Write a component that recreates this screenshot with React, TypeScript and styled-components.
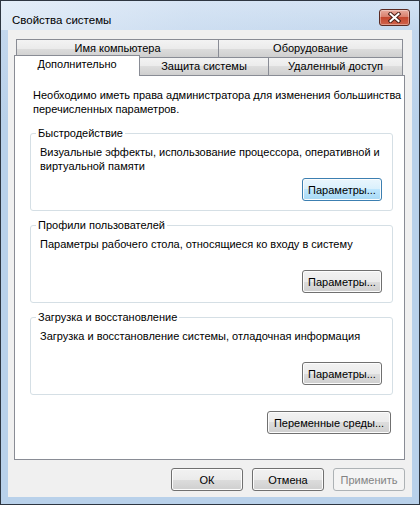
import React from 'react'
import styled, { createGlobalStyle, css } from 'styled-components'

const GlobalStyle = createGlobalStyle`
  html, body {
    margin: 0;
    padding: 0;
    background: #ffffff;
  }
  body {
    font-family: "Liberation Sans", "DejaVu Sans", sans-serif;
    font-size: 11px;
    color: #000;
  }
  * {
    box-sizing: border-box;
  }
`

const Window = styled.div`
  width: 420px;
  height: 505px;
  border: 1px solid #2e3641;
  padding: 0 7px 7px 7px;
  display: flex;
  flex-direction: column;
  background: linear-gradient(to bottom, #d3e2f3 0px, #c3d7ed 30px, #b9d1ea 120px, #b9d1ea 100%);
`

const TitleBar = styled.div`
  height: 29px;
  margin: 0 -7px;
  padding: 0 9px 0 11px;
  display: flex;
  justify-content: space-between;
  align-items: flex-start;
  background: linear-gradient(100deg, rgba(235, 242, 250, 0.7) 0%, rgba(220, 232, 246, 0.4) 45%, rgba(190, 212, 236, 0) 100%);
`

const TitleText = styled.span`
  margin-top: 11px;
  font-size: 11.5px;
  line-height: 16px;
  color: #000;
`

const CloseButton = styled.div`
  width: 31px;
  height: 17px;
  margin-top: 8px;
  border: 1px solid #5b2a22;
  border-radius: 3px;
  display: flex;
  align-items: center;
  justify-content: center;
  background: linear-gradient(to bottom, #e8ab9e 0%, #d9806e 45%, #c4472f 50%, #cf634c 100%);
  box-shadow: inset 0 0 0 1px rgba(255, 255, 255, 0.35);
`

const Client = styled.div`
  flex: 1;
  background: #f0f0f0;
  padding: 9px 7px 6px 6px;
  display: flex;
  flex-direction: column;
`

const TabControl = styled.div`
  flex: 1;
  display: flex;
  flex-direction: column;
`

const TabRow = styled.div`
  height: 18px;
  margin: 0 2px 0 2px;
  display: flex;
  align-items: flex-end;
`

const Tab = styled.div<{ $w: number; $active?: boolean; $first?: boolean }>`
  width: ${p => p.$w}px;
  height: 18px;
  margin-left: ${p => (p.$first ? 0 : -1)}px;
  padding-top: 1px;
  border: 1px solid #898c95;
  border-bottom: none;
  text-align: center;
  font-size: 11px;
  line-height: 15px;
  white-space: nowrap;
  background: linear-gradient(to bottom, #f3f3f3 0%, #ebebeb 50%, #dddddd 50%, #cfcfcf 100%);
  ${p =>
    p.$active &&
    css`
      position: relative;
      z-index: 2;
      height: 21px;
      margin-left: -2px;
      margin-bottom: -1px;
      background: #ffffff;
    `}
`

const Panel = styled.div`
  flex: 1;
  border: 1px solid #898c95;
  background: #ffffff;
  padding: 12px 0 0 15px;
  display: flex;
  flex-direction: column;
`

const Intro = styled.p`
  margin: 0 0 0 3px;
  font-size: 11px;
  line-height: 14px;
  width: 372px;
`

const GroupBox = styled.div<{ $first?: boolean }>`
  width: 363px;
  height: 78px;
  margin-top: ${p => (p.$first ? 17 : 14)}px;
  border: 1px solid #d5dfe5;
  border-radius: 3px;
  display: flex;
  flex-direction: column;
`

const GroupTitle = styled.span`
  align-self: flex-start;
  margin: -8px 0 0 5px;
  padding: 0 2px;
  background: #ffffff;
  font-size: 11px;
  line-height: 14px;
`

const GroupText = styled.div`
  margin: 5px 6px 0 9px;
  min-height: 28px;
  font-size: 11px;
  line-height: 14px;
`

const GroupActions = styled.div`
  margin: 5px 10px 0 0;
  display: flex;
  justify-content: flex-end;
`

const PanelActions = styled.div`
  width: 363px;
  margin-top: 16px;
  padding-right: 2px;
  display: flex;
  justify-content: flex-end;
`

const ButtonBar = styled.div`
  margin-top: 8px;
  display: flex;
  justify-content: flex-end;
  gap: 9px;
`

type Variant = 'normal' | 'default' | 'disabled'

const Button = styled.button<{ $w: number; $variant?: Variant }>`
  width: ${p => p.$w}px;
  height: 23px;
  padding: 0;
  border: 1px solid #707070;
  border-radius: 3px;
  font-family: inherit;
  font-size: 11px;
  white-space: nowrap;
  color: #000;
  background: linear-gradient(to bottom, #f2f2f2 0%, #ebebeb 50%, #dddddd 50%, #cfcfcf 100%);
  box-shadow: inset 0 0 0 1px #fcfcfc;
  ${p =>
    p.$variant === 'default' &&
    css`
      border-color: #3c7fb1;
      background: linear-gradient(to bottom, #eaf6fd 0%, #d9f0fc 50%, #bee6fd 50%, #a7d9f5 100%);
    `}
  ${p =>
    p.$variant === 'disabled' &&
    css`
      border-color: #adb2b5;
      color: #838383;
      background: #f4f4f4;
      box-shadow: none;
    `}
`

const groups = [
  {
    title: 'Быстродействие',
    text: 'Визуальные эффекты, использование процессора, оперативной и виртуальной памяти',
    focused: true,
  },
  {
    title: 'Профили пользователей',
    text: 'Параметры рабочего стола, относящиеся ко входу в систему',
  },
  {
    title: 'Загрузка и восстановление',
    text: 'Загрузка и восстановление системы, отладочная информация',
  },
]

const CloseGlyph = () => (
  <svg width="13" height="11" viewBox="0 0 13 11">
    <path d="M2.5 2 L10.5 9 M10.5 2 L2.5 9" stroke="#4a1e17" strokeWidth="4" strokeLinecap="square" />
    <path d="M2.5 2 L10.5 9 M10.5 2 L2.5 9" stroke="#ffffff" strokeWidth="2" strokeLinecap="square" />
  </svg>
)

const App: React.FC = () => {
  return (
    <>
      <GlobalStyle />
      <Window>
        <TitleBar>
          <TitleText>Свойства системы</TitleText>
          <CloseButton>
            <CloseGlyph />
          </CloseButton>
        </TitleBar>
        <Client>
          <TabControl>
            <TabRow>
              <Tab $w={203} $first>Имя компьютера</Tab>
              <Tab $w={185}>Оборудование</Tab>
            </TabRow>
            <TabRow>
              <Tab $w={126} $first $active>Дополнительно</Tab>
              <Tab $w={130}>Защита системы</Tab>
              <Tab $w={135}>Удаленный доступ</Tab>
            </TabRow>
            <Panel>
              <Intro>Необходимо иметь права администратора для изменения большинства перечисленных параметров.</Intro>
              {groups.map((g, i) => (
                <GroupBox key={g.title} $first={i === 0}>
                  <GroupTitle>{g.title}</GroupTitle>
                  <GroupText>{g.text}</GroupText>
                  <GroupActions>
                    <Button $w={80} $variant={g.focused ? 'default' : 'normal'}>Параметры...</Button>
                  </GroupActions>
                </GroupBox>
              ))}
              <PanelActions>
                <Button $w={124}>Переменные среды...</Button>
              </PanelActions>
            </Panel>
          </TabControl>
          <ButtonBar>
            <Button $w={72}>ОК</Button>
            <Button $w={72}>Отмена</Button>
            <Button $w={72} $variant="disabled">Применить</Button>
          </ButtonBar>
        </Client>
      </Window>
    </>
  )
}

export default App
